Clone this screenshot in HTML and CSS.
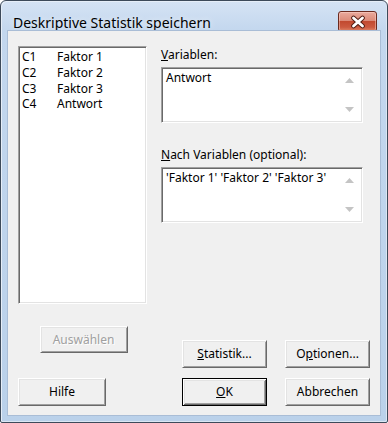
FILE: index.html
```html
<!DOCTYPE html>
<html lang="de">
<head>
<meta charset="utf-8">
<title>Deskriptive Statistik speichern</title>
<link rel="stylesheet" href="styles.css">
</head>
<body>
<div class="window">
  <div class="titlebar">
    <span class="title">Deskriptive Statistik speichern</span>
    <div class="close">
      <svg width="16" height="14" viewBox="0 0 16 14">
        <path d="M3.5 3 L12.5 11 M12.5 3 L3.5 11" stroke="#4e1a10" stroke-width="4.6" stroke-linecap="round" fill="none"/>
        <path d="M3.5 3 L12.5 11 M12.5 3 L3.5 11" stroke="#ffffff" stroke-width="2.8" stroke-linecap="round" fill="none"/>
      </svg>
    </div>
  </div>
  <div class="client">
    <div class="main">
      <div class="left">
        <div class="list">
          <div class="row"><span class="col">C1</span><span>Faktor 1</span></div>
          <div class="row"><span class="col">C2</span><span>Faktor 2</span></div>
          <div class="row"><span class="col">C3</span><span>Faktor 3</span></div>
          <div class="row"><span class="col">C4</span><span>Antwort</span></div>
        </div>
        <button class="btn btn-select" disabled>Auswählen</button>
      </div>
      <div class="right">
        <div class="label label-first"><u>V</u>ariablen:</div>
        <div class="field">
          <div class="field-text">Antwort</div>
          <div class="scroll">
            <svg width="9" height="5" viewBox="0 0 9 5"><polygon points="0,5 9,5 4.5,0" fill="#c4c4c4"/></svg>
            <svg width="9" height="5" viewBox="0 0 9 5"><polygon points="0,0 9,0 4.5,5" fill="#c4c4c4"/></svg>
          </div>
        </div>
        <div class="label label-second"><u>N</u>ach Variablen (optional):</div>
        <div class="field">
          <div class="field-text">'Faktor 1' 'Faktor 2' 'Faktor 3'</div>
          <div class="scroll">
            <svg width="9" height="5" viewBox="0 0 9 5"><polygon points="0,5 9,5 4.5,0" fill="#c4c4c4"/></svg>
            <svg width="9" height="5" viewBox="0 0 9 5"><polygon points="0,0 9,0 4.5,5" fill="#c4c4c4"/></svg>
          </div>
        </div>
        <div class="btnrow">
          <button class="btn"><u>S</u>tatistik...</button>
          <button class="btn">O<u>p</u>tionen...</button>
        </div>
      </div>
    </div>
    <div class="bottom">
      <button class="btn btn-help">Hilfe</button>
      <button class="btn btn-default"><u>O</u>K</button>
      <button class="btn">Abbrechen</button>
    </div>
  </div>
</div>
</body>
</html>
```
FILE: styles.css
```css
html, body {
  margin: 0;
  padding: 0;
  background: #ffffff;
}
body {
  font-family: "Noto Sans", "Open Sans", sans-serif;
  font-size: 12px;
  color: #000;
}
.window {
  width: 388px;
  height: 423px;
  box-sizing: border-box;
  border: 1px solid #3d4a5a;
  border-radius: 6px 6px 2px 2px;
  background: linear-gradient(to bottom, #d5e3f4 0px, #c3d7ee 30px, #bad1ea 100%);
  display: flex;
  flex-direction: column;
  box-shadow: inset 1px 1px 0 #e6eef8, inset -1px -1px 0 #dbe6f3;
}
.titlebar {
  height: 30px;
  display: flex;
  align-items: flex-start;
  padding-left: 12px;
  padding-right: 10px;
}
.title {
  font-size: 14px;
  line-height: 18px;
  margin-top: 13px;
  color: #000;
  text-shadow: 0 0 6px rgba(255,255,255,0.8);
}
.close {
  margin-left: auto;
  margin-top: 10px;
  width: 37px;
  height: 19px;
  border: 1px solid #6b2a1f;
  border-radius: 3px;
  background: linear-gradient(to bottom, #eaaa9d 0%, #dc8b79 45%, #c24a30 50%, #cc5a40 80%, #de8669 100%);
  box-shadow: inset 0 0 0 1px rgba(255,220,210,0.45);
  display: flex;
  align-items: center;
  justify-content: center;
}
.close svg { display: block; }
.client {
  margin: 0 7px 7px 7px;
  flex: 1;
  background: #f0f0f0;
  box-shadow: 0 0 0 1px #a9bdd6;
  display: flex;
  flex-direction: column;
}
.main {
  display: flex;
  padding: 15px 0 0 10px;
}
.left {
  width: 129px;
  display: flex;
  flex-direction: column;
  align-items: center;
}
.list {
  width: 129px;
  height: 258px;
  box-sizing: border-box;
  background: #fff;
  border: 1px solid;
  border-color: #a0a0a0 #fff #fff #a0a0a0;
  box-shadow: inset 1px 1px 0 #696969, inset -1px -1px 0 #e3e3e3;
  padding: 2px 0 0 3px;
}
.row {
  display: flex;
  line-height: 16px;
  height: 15.8px;
  white-space: nowrap;
}
.col {
  width: 35px;
}
.btn {
  font-family: "Noto Sans", "Open Sans", sans-serif;
  font-size: 12px;
  color: #000;
  width: 85px;
  height: 28px;
  padding: 0;
  margin: 0;
  box-sizing: border-box;
  background: #f0f0f0;
  border: 1px solid;
  border-color: #fff #696969 #696969 #fff;
  box-shadow: inset 1px 1px 0 #e3e3e3, inset -1px -1px 0 #a0a0a0;
  border-radius: 0;
  line-height: 16px;
}
.btn u { text-underline-offset: 1px; }
.btn-select {
  width: 88px;
  height: 27px;
  margin-top: 22px;
  margin-left: 2px;
  color: #a0a0a0;
  text-shadow: 1px 1px 0 #fff;
}
.btn-help {
  width: 88px;
}
.btn-default {
  border: 1px solid #000;
  box-shadow: inset 1px 1px 0 #fff, inset -1px -1px 0 #696969, inset 2px 2px 0 #e3e3e3, inset -2px -2px 0 #a0a0a0;
}
.right {
  margin-left: 14px;
  width: 209px;
}
.label {
  line-height: 16px;
  height: 16px;
  white-space: nowrap;
}
.label u { text-underline-offset: 1px; }
.label-first { margin-top: 1px; }
.label-second { margin-top: 24px; }
.field {
  margin-top: 4px;
  width: 202px;
  height: 56px;
  box-sizing: border-box;
  background: #fff;
  border: 1px solid;
  border-color: #a0a0a0 #fff #fff #a0a0a0;
  box-shadow: inset 1px 1px 0 #696969, inset -1px -1px 0 #e3e3e3;
  display: flex;
}
.field-text {
  flex: 1;
  padding: 2px 0 0 4px;
  line-height: 16px;
  white-space: nowrap;
  overflow: hidden;
}
.scroll {
  width: 20px;
  margin: 1px 1px 1px 0;
  display: flex;
  flex-direction: column;
  justify-content: space-between;
  align-items: flex-start;
  padding: 9px 0 9px 4px;
  box-sizing: border-box;
}
.scroll svg { display: block; }
.btnrow {
  display: flex;
  gap: 18px;
  margin-top: 117px;
  margin-left: 21px;
}
.bottom {
  display: flex;
  padding: 10px 0 0 10px;
}
.bottom .btn-default { margin-left: 76px; }
.bottom .btn-default + .btn { margin-left: 18px; }
```
